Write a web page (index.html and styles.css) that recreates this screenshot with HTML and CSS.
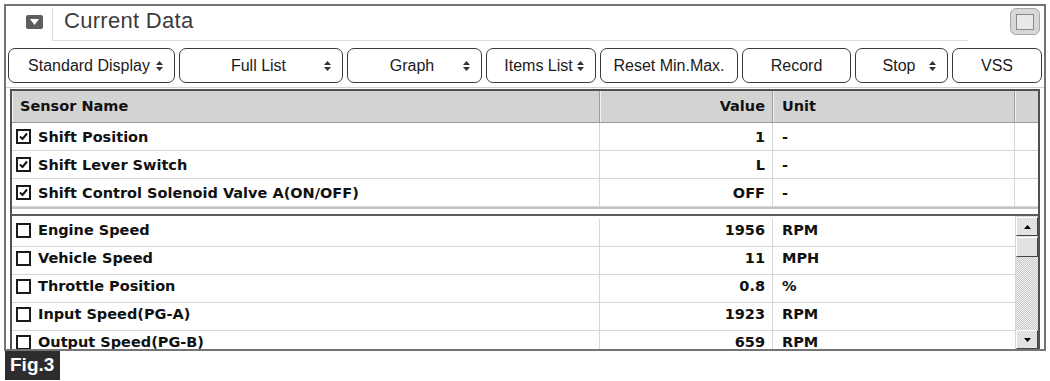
FILE: index.html
```html
<!DOCTYPE html>
<html lang="en">
<head>
    <meta charset="UTF-8">
    <title>Current Data</title>
    <link rel="stylesheet" href="styles.css">
</head>
<body>
    <div class="page">
        <div class="window">
            <div class="titlebar">
                <div class="menu-cell">
                    <span class="menu-icon">
                        <svg width="9" height="6" viewBox="0 0 9 6"><path d="M0 0H9L4.5 6Z" fill="#fff"/></svg>
                    </span>
                </div>
                <div class="title">Current Data</div>
                <div class="win-btn"><span></span></div>
            </div>

            <div class="toolbar">
                <div class="tbtn spin b1"><i></i><span>Standard Display</span><svg class="arrows" width="7" height="10" viewBox="0 0 7 10"><path d="M3.5 0L7 4H0Z M0 6H7L3.5 10Z" fill="#333"/></svg></div>
                <div class="tbtn spin b2"><i></i><span>Full List</span><svg class="arrows" width="7" height="10" viewBox="0 0 7 10"><path d="M3.5 0L7 4H0Z M0 6H7L3.5 10Z" fill="#333"/></svg></div>
                <div class="tbtn spin b3"><i></i><span>Graph</span><svg class="arrows" width="7" height="10" viewBox="0 0 7 10"><path d="M3.5 0L7 4H0Z M0 6H7L3.5 10Z" fill="#333"/></svg></div>
                <div class="tbtn spin b4"><i></i><span>Items List</span><svg class="arrows" width="7" height="10" viewBox="0 0 7 10"><path d="M3.5 0L7 4H0Z M0 6H7L3.5 10Z" fill="#333"/></svg></div>
                <div class="tbtn b5">Reset Min.Max.</div>
                <div class="tbtn b6">Record</div>
                <div class="tbtn spin b7"><i></i><span>Stop</span><svg class="arrows" width="7" height="10" viewBox="0 0 7 10"><path d="M3.5 0L7 4H0Z M0 6H7L3.5 10Z" fill="#333"/></svg></div>
                <div class="tbtn b8">VSS</div>
            </div>

            <div class="grid">
                <div class="row head">
                    <div class="cell name">Sensor Name</div>
                    <div class="cell value">Value</div>
                    <div class="cell unit">Unit</div>
                    <div class="cell extra"></div>
                </div>

                <div class="pinned">
                    <div class="row">
                        <div class="cell name"><span class="chk on"></span>Shift Position</div>
                        <div class="cell value">1</div>
                        <div class="cell unit">-</div>
                        <div class="cell extra"></div>
                    </div>
                    <div class="row">
                        <div class="cell name"><span class="chk on"></span>Shift Lever Switch</div>
                        <div class="cell value">L</div>
                        <div class="cell unit">-</div>
                        <div class="cell extra"></div>
                    </div>
                    <div class="row">
                        <div class="cell name"><span class="chk on"></span>Shift Control Solenoid Valve A(ON/OFF)</div>
                        <div class="cell value">OFF</div>
                        <div class="cell unit">-</div>
                        <div class="cell extra"></div>
                    </div>
                </div>

                <div class="live">
                    <div class="live-rows">
                        <div class="row">
                            <div class="cell name"><span class="chk"></span>Engine Speed</div>
                            <div class="cell value">1956</div>
                            <div class="cell unit">RPM</div>
                        </div>
                        <div class="row">
                            <div class="cell name"><span class="chk"></span>Vehicle Speed</div>
                            <div class="cell value">11</div>
                            <div class="cell unit">MPH</div>
                        </div>
                        <div class="row">
                            <div class="cell name"><span class="chk"></span>Throttle Position</div>
                            <div class="cell value">0.8</div>
                            <div class="cell unit">%</div>
                        </div>
                        <div class="row">
                            <div class="cell name"><span class="chk"></span>Input Speed(PG-A)</div>
                            <div class="cell value">1923</div>
                            <div class="cell unit">RPM</div>
                        </div>
                        <div class="row">
                            <div class="cell name"><span class="chk"></span>Output Speed(PG-B)</div>
                            <div class="cell value">659</div>
                            <div class="cell unit">RPM</div>
                        </div>
                    </div>
                    <div class="scrollbar">
                        <div class="sb-btn">
                            <svg width="7" height="4" viewBox="0 0 7 4"><path d="M3.5 0L7 4H0Z" fill="#000"/></svg>
                        </div>
                        <div class="sb-thumb"></div>
                        <div class="sb-track"></div>
                        <div class="sb-btn">
                            <svg width="7" height="4" viewBox="0 0 7 4"><path d="M0 0H7L3.5 4Z" fill="#000"/></svg>
                        </div>
                    </div>
                </div>
            </div>
        </div>
        <div class="fig">Fig.3</div>
    </div>
</body>
</html>
```

FILE: styles.css
```css
body {
    margin: 0;
    background: #fff;
    font-family: "Liberation Sans", Arial, sans-serif;
    color: #222;
}
.page {
    padding: 4px 0 0 4px;
}
.window {
    width: 1042px;
    box-sizing: border-box;
    border: 2px solid #747474;
}

/* title bar */
.titlebar {
    display: flex;
    height: 35px;
}
.menu-cell {
    width: 47px;
    margin-top: 2px;
    padding: 7px 0 0 20px;
    box-sizing: border-box;
    border-right: 1px solid #dcdcdc;
}
.menu-icon {
    display: flex;
    align-items: center;
    justify-content: center;
    width: 17px;
    height: 14px;
    background: #5e5e5e;
    border-radius: 2px;
}
.title {
    flex: 1;
    margin-right: 42px;
    padding: 2px 0 0 11px;
    font-size: 22px;
    letter-spacing: 0.3px;
    color: #3c3c3c;
    border-bottom: 1px solid #dcdcdc;
}
.win-btn {
    width: 30px;
    height: 27px;
    margin: 2px 4px 0 0;
    box-sizing: border-box;
    display: flex;
    align-items: center;
    justify-content: center;
    background: #d8d8d8;
    border: 1px solid #a8a8a8;
    border-radius: 6px;
}
.win-btn span {
    width: 16px;
    height: 14px;
    background: #e9e9e9;
    border: 1px solid #8a8a8a;
}

/* toolbar */
.toolbar {
    display: flex;
    gap: 4px;
    padding: 7px 0 4px 2px;
    border-bottom: 1px solid #cfcfcf;
}
.tbtn {
    height: 35px;
    box-sizing: border-box;
    border: 1px solid #3a3a3a;
    border-radius: 7px;
    background: #fff;
    font-size: 16px;
    color: #1a1a1a;
    display: flex;
    align-items: center;
    justify-content: center;
    white-space: nowrap;
}
.tbtn.spin {
    display: grid;
    grid-template-columns: 1fr auto 1fr;
    align-items: center;
    padding: 0 11px 0 6px;
}
.tbtn .arrows {
    justify-self: end;
}
.b1 { width: 167px; }
.b2 { width: 164px; }
.b3 { width: 135px; }
.b4 { width: 110px; }
.b5 { width: 138px; }
.b6 { width: 109px; }
.b7 { width: 93px; }
.b8 { width: 90px; }

/* data grid */
.grid {
    margin: 1px 4px 0;
    border: 2px solid #505050;
    border-bottom: none;
    font-family: "DejaVu Sans", Verdana, sans-serif;
    font-weight: bold;
    font-size: 14.5px;
    color: #111;
}
.row {
    display: grid;
    grid-template-columns: 588px 173px 242px 1fr;
    height: 28px;
    border-bottom: 1px solid #d6d6d6;
    box-sizing: border-box;
}
.cell {
    display: flex;
    align-items: center;
    white-space: nowrap;
    overflow: hidden;
    border-right: 1px solid #d6d6d6;
}
.cell.name {
    padding-left: 4px;
}
.cell.value {
    justify-content: flex-end;
    padding-right: 7px;
}
.cell.unit {
    padding-left: 9px;
}
.cell.extra {
    border-right: none;
}
.row.head {
    height: 32px;
    background: #d3d3d3;
    border-bottom: 1px solid #9a9a9a;
}
.head .cell {
    padding-bottom: 2px;
    border-right: 1px solid #9c9c9c;
    box-shadow: inset 1px 0 0 #f2f2f2;
}
.head .cell.name {
    padding-left: 8px;
}
.head .cell.extra {
    border-right: none;
}

.pinned {
    border-bottom: 2px solid #c4c4c4;
}

.chk {
    width: 15px;
    height: 15px;
    margin-right: 7px;
    box-sizing: border-box;
    border: 2px solid #1a1a1a;
    background: #fff;
    flex: none;
}
.chk.on {
    background: #fff url("data:image/svg+xml,%3Csvg xmlns='http://www.w3.org/2000/svg' width='11' height='11'%3E%3Cpath d='M2 5.5L4.5 8L9 2.5' fill='none' stroke='%23111' stroke-width='2'/%3E%3C/svg%3E") center no-repeat;
}

/* scrolling part */
.live {
    display: flex;
    height: 135px;
    margin-top: 5px;
    border-top: 2px solid #5a5a5a;
    box-sizing: border-box;
    overflow: hidden;
}
.live-rows {
    flex: 1;
    padding-top: 3px;
}
.live .row {
    grid-template-columns: 588px 173px 1fr;
}
.live .cell {
    padding-bottom: 5px;
}
.live .cell.unit {
    border-right: none;
}
.scrollbar {
    width: 22px;
    display: flex;
    flex-direction: column;
    padding-top: 1px;
    background: repeating-conic-gradient(#c6c6c6 0 25%, #f4f4f4 0 50%) 0 0 / 2px 2px;
    border-left: 1px solid #d6d6d6;
}
.sb-btn,
.sb-thumb {
    height: 19px;
    box-sizing: border-box;
    background: #e2e2e2;
    border: 1px solid;
    border-color: #fff #444 #444 #fff;
    display: flex;
    align-items: center;
    justify-content: center;
}
.sb-thumb {
    height: 20px;
    margin-top: 1px;
}
.sb-track {
    flex: 1;
}

.fig {
    display: inline-block;
    margin-left: 1px;
    padding: 3px 6px 4px 5px;
    background: #2d2d2d;
    color: #fff;
    font-weight: bold;
    font-size: 19px;
}
```
